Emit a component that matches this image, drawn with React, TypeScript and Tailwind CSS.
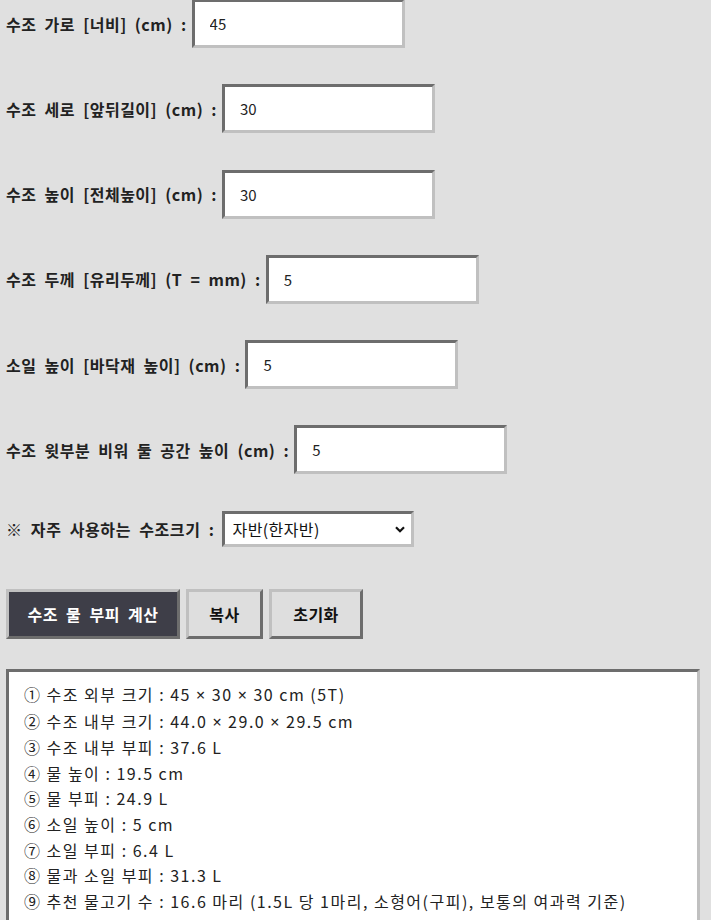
import React from "react";

const rows = [
  { label: "수조 가로 [너비] (cm) :", value: "45" },
  { label: "수조 세로 [앞뒤길이] (cm) :", value: "30" },
  { label: "수조 높이 [전체높이] (cm) :", value: "30" },
  { label: "수조 두께 [유리두께] (T = mm) :", value: "5" },
  { label: "소일 높이 [바닥재 높이] (cm) :", value: "5" },
  { label: "수조 윗부분 비워 둘 공간 높이 (cm) :", value: "5" },
];

const results = [
  "① 수조 외부 크기 : 45 × 30 × 30 cm (5T)",
  "② 수조 내부 크기 : 44.0 × 29.0 × 29.5 cm",
  "③ 수조 내부 부피 : 37.6 L",
  "④ 물 높이 : 19.5 cm",
  "⑤ 물 부피 : 24.9 L",
  "⑥ 소일 높이 : 5 cm",
  "⑦ 소일 부피 : 6.4 L",
  "⑧ 물과 소일 부피 : 31.3 L",
  "⑨ 추천 물고기 수 : 16.6 마리 (1.5L 당 1마리, 소형어(구피), 보통의 여과력 기준)",
];

const font = { fontFamily: '"Noto Sans CJK KR", "Noto Sans", sans-serif' };
const latin = { fontFamily: '"Noto Sans", sans-serif' };

const btnBase =
  "h-[50px] box-border border-[3px] border-t-[#c0c0c0] border-l-[#c0c0c0] border-r-[#6d6d6d] border-b-[#6d6d6d] text-[16px] font-bold tracking-[0.5px] [word-spacing:4px]";

const inset =
  "box-border border-[3px] border-t-[#6d6d6d] border-l-[#6d6d6d] border-r-[#c0c0c0] border-b-[#c0c0c0] bg-white";

function ResultLine({ text }: { text: string }) {
  const parts = text.split("×");
  return (
    <div className="text-[16px] leading-[25.6px] text-[#222] tracking-[1.5px] whitespace-nowrap">
      {parts.map((p, i) => (
        <React.Fragment key={i}>
          {p}
          {i < parts.length - 1 && <span style={latin}>×</span>}
        </React.Fragment>
      ))}
    </div>
  );
}

export default function App() {
  return (
    <div
      className="min-h-[920px] w-full bg-[#e0e0e0] pl-[6px] pr-[11px] text-[#222] overflow-hidden"
      style={font}
    >
      <div className="-mt-[1px] flex flex-col gap-[36.3px]">
        {rows.map((r) => (
          <div key={r.label} className="flex items-center h-[49px]">
            <span className="text-[16px] font-bold leading-none tracking-[0.5px] [word-spacing:4px] whitespace-nowrap">
              {r.label}
            </span>
            <input
              defaultValue={r.value}
              className={`ml-[5px] w-[213px] h-[49px] ${inset} pl-[15px] text-[15px] text-[#222] outline-none`}
              style={font}
            />
          </div>
        ))}
      </div>

      <div className="mt-[36.5px] flex items-center h-[36px]">
        <span className="text-[16px] font-bold leading-none tracking-[0.6px] [word-spacing:4px] whitespace-nowrap">
          ※ 자주 사용하는 수조크기 :
        </span>
        <div className="relative ml-[7px]">
          <select
            defaultValue="jaban"
            className={`appearance-none w-[192px] h-[36px] ${inset} pl-[8px] text-[16px] tracking-[0.4px] text-[#111] outline-none`}
            style={font}
          >
            <option value="jaban">자반(한자반)</option>
          </select>
          <svg
            className="pointer-events-none absolute right-[9px] top-[15px]"
            width="10"
            height="7"
            viewBox="0 0 10 7"
          >
            <path d="M1 1.2 L5 5.2 L9 1.2" fill="none" stroke="#111" strokeWidth="2.2" />
          </svg>
        </div>
      </div>

      <div className="mt-[42px] flex gap-[6px]">
        <button className={`w-[174px] ${btnBase} bg-[#3e3e48] text-white`} style={font}>
          수조 물 부피 계산
        </button>
        <button className={`w-[77px] ${btnBase} bg-[#dedede] text-[#111]`} style={font}>
          복사
        </button>
        <button className={`w-[94px] ${btnBase} bg-[#dedede] text-[#111]`} style={font}>
          초기화
        </button>
      </div>

      <div className={`mt-[30px] w-[694px] ${inset} pt-[10px] pb-[12px] pl-[15px] pr-[10px]`}>
        {results.map((t) => (
          <ResultLine key={t} text={t} />
        ))}
      </div>
    </div>
  );
}
